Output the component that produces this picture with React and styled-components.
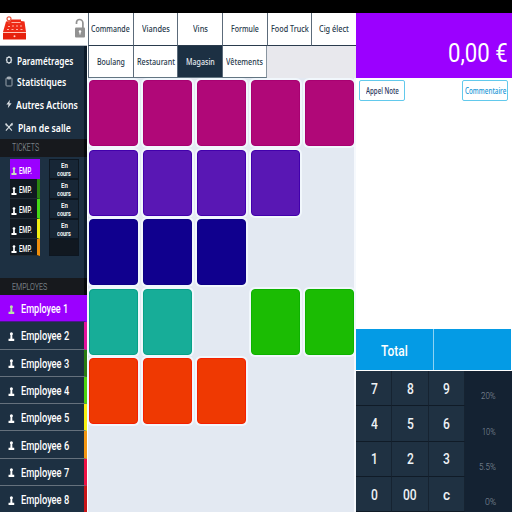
import React, { useLayoutEffect, useRef } from "react";
import styled, { createGlobalStyle } from "styled-components";

const GlobalStyle = createGlobalStyle`
  * { box-sizing: border-box; }
  body { margin: 0; overflow: hidden; background: #000; font-family: Roboto, "Liberation Sans", sans-serif; }
`;

/* Condensed label: the text is squeezed horizontally to the requested width. */
const LabelBox = styled.span`
  display: block;
  flex: none;
  width: ${(p) => p.$w}px;
  font-family: ${(p) => (p.$noto ? '"Noto Sans", sans-serif' : "Roboto, sans-serif")};
  font-size: ${(p) => p.$size}px;
  font-weight: ${(p) => p.$weight || 400};
  line-height: 1;
  color: ${(p) => p.$color};
  white-space: nowrap;
`;
const LabelText = styled.span`
  display: inline-block;
  transform-origin: 0 50%;
`;

function Label({ children, width, size, weight, color = "#fff", noto }) {
  const ref = useRef(null);
  useLayoutEffect(() => {
    const el = ref.current;
    el.style.transform = `scaleX(${width / el.offsetWidth})`;
  }, [width, size]);
  return (
    <LabelBox $w={width} $size={size} $weight={weight} $color={color} $noto={noto}>
      <LabelText ref={ref}>{children}</LabelText>
    </LabelBox>
  );
}

const Screen = styled.div`
  width: 512px;
  height: 512px;
  display: flex;
  flex-direction: column;
  overflow: hidden;
  background: #fff;
`;
const StatusBar = styled.div`
  flex: none;
  height: 13px;
  background: #000;
`;
const Main = styled.div`
  display: grid;
  grid-template-columns: 87px 269px 156px;
  height: 499px;
`;

const Sidebar = styled.aside`
  display: flex;
  flex-direction: column;
  height: 499px;
  overflow: hidden;
  background: #1d3042;
`;
const Brand = styled.div`
  flex: none;
  display: flex;
  justify-content: space-between;
  align-items: flex-start;
  height: 33px;
  padding: 2px 1px 0 3px;
  background: #fff;
  border-bottom: 1px solid #b4bac3;
`;
const Menu = styled.nav`
  flex: none;
  height: 93px;
  padding-top: 3px;
  border-right: 3px solid #0d1b2a;
`;
const MenuItem = styled.div`
  display: flex;
  align-items: center;
  gap: ${(p) => p.$gap}px;
  height: ${(p) => p.$h}px;
  padding-left: 5px;
`;
const SectionTitle = styled.div`
  flex: none;
  display: flex;
  align-items: center;
  height: ${(p) => p.$h}px;
  padding-left: 12px;
  background: #17191d;
  border-right: 3px solid #08090c;
`;
const Tickets = styled.div`
  flex: none;
  display: grid;
  grid-template-columns: 30px 30px;
  column-gap: 9px;
  height: 121px;
  padding: 2px 0 0 10px;
  align-items: start;
  border-right: 3px solid #0d1b2a;
`;
const TicketColumn = styled.div`
  display: grid;
  grid-template-rows: 20px 20px 20px 20px 17px;
  background: #0e1b27;
`;
const Ticket = styled.div`
  display: flex;
  align-items: center;
  gap: 2px;
  padding: 4px 0 0 1px;
  background: ${(p) => (p.$active ? "#9b00ff" : "#111921")};
  border-right: ${(p) => (p.$active ? "0" : "3px")} solid ${(p) => p.$color};
  border-bottom: ${(p) => (p.$active ? "0" : "1px")} solid #202a33;
`;
const Status = styled.div`
  display: flex;
  flex-direction: column;
  align-items: center;
  justify-content: center;
  gap: 0;
  padding-top: 1px;
  background: ${(p) => (p.$empty ? "#111820" : "#172636")};
  border: 1px solid #0d1620;
`;
const Employee = styled.div`
  flex: none;
  display: flex;
  align-items: center;
  gap: 6px;
  height: 27.3px;
  padding: 2px 0 0 8px;
  background: ${(p) => (p.$active ? "#9b00ff" : "#1d3042")};
  border-right: 3px solid ${(p) => p.$color};
  border-bottom: 1px solid ${(p) => (p.$active ? "#4c168c" : "#65717d")};
`;

const Catalog = styled.section`
  height: 499px;
  background: #e3e9f2;
  border-left: 1px solid #fff;
  border-right: 2px solid #f6f9fd;
`;
const Tabs = styled.div`
  display: grid;
  grid-template-columns: repeat(6, 44.7px);
  grid-template-rows: 33px 32px;
  width: 268px;
  height: 65px;
  overflow: hidden;
  background: #e8e8ed;
`;
const Tab = styled.div`
  display: flex;
  align-items: center;
  justify-content: center;
  background: ${(p) => (p.$active ? "#1c3043" : "#fff")};
  border-left: 1px solid #5c6b7a;
  border-bottom: 1px solid ${(p) => (p.$second ? "#627582" : "#2a3b4d")};
  border-right: ${(p) => (p.$last ? "1px" : "0")} solid #8995a0;
`;
const Products = styled.div`
  display: grid;
  grid-template-columns: repeat(5, 49px);
  grid-auto-rows: 66px;
  gap: 3.6px 5px;
  padding: 2px 0 0 1px;
`;
const Product = styled.div`
  background: ${(p) => p.$color};
  border: 1px solid ${(p) => p.$edge};
  border-radius: 4px;
  box-shadow: 0 0 0 2px #f1f7fc;
`;

const Order = styled.section`
  display: flex;
  flex-direction: column;
  height: 499px;
  background: #fff;
`;
const Amount = styled.div`
  flex: none;
  display: flex;
  align-items: center;
  justify-content: flex-end;
  height: 65px;
  padding: 17px 4px 0 0;
  background: #9b00ff;
`;
const OrderBody = styled.div`
  flex: 1;
  display: flex;
  align-items: flex-start;
  justify-content: space-between;
  padding: 2px 4px 0 3px;
`;
const NoteButton = styled.button`
  display: flex;
  align-items: center;
  justify-content: center;
  width: 46px;
  height: 21px;
  padding: 0;
  background: #fff;
  border: 1px solid #62c9ec;
  border-radius: 2px;
`;
const TotalBar = styled.div`
  flex: none;
  display: grid;
  grid-template-columns: 78px 77px;
  height: 42px;
  border-bottom: 1px solid #fff;
`;
const TotalCell = styled.div`
  display: flex;
  align-items: center;
  justify-content: center;
  padding-top: 4px;
  background: #049be5;
  border-right: 1px solid ${(p) => (p.$divider ? "#8ed3f3" : "#049be5")};
`;
const Keypad = styled.div`
  flex: none;
  display: grid;
  grid-template-columns: 36px 36.500px 36px 47.500px;
  grid-template-rows: repeat(4, 35.3px);
  height: 141px;
  background: #142332;
`;
const Key = styled.div`
  display: flex;
  align-items: center;
  justify-content: center;
  padding: 3px 0 0 1px;
  background: #1f3142;
  border-right: 1px solid #162331;
  border-bottom: 1px solid #101b27;
`;
const Rate = styled.div`
  display: flex;
  align-items: center;
  justify-content: flex-end;
  padding: 15px 16px 0 0;
  background: #142232;
`;

const PadlockSlot = styled.div`
  padding-top: 3px;
`;

const Pawn = ({ color = "#fff", size = 9 }) => (
  <svg width={size * 0.75} height={size} viewBox="0 0 9 12" fill={color}>
    <circle cx="4.5" cy="2.2" r="2" />
    <path d="M3.4 3h2.2l.3 6H8.300v3H.7V9h2.400z" />
  </svg>
);

const Register = () => (
  <svg width="24" height="26" viewBox="0 0 24 26">
    <path d="M3 6.500 8 6V4.500h10V6l3.500.5L23 17H0z" fill="#ee2a16" />
    <path d="M0 18h23v6.500H0z" fill="#e6200c" />
    <circle cx="6" cy="3.800" r="2" fill="#fff" stroke="#e9523b" strokeWidth="1.200" />
    <path d="M6 6v3" stroke="#e9523b" strokeWidth="1.200" />
    <path d="M8.500 7.500h9M5 11.500h2M9 11h2M13 11h2M17 11h2M4 14.500h2M8.500 14.500h2M13 14.500h2M17.500 14.500h2" stroke="#ffb3a4" strokeWidth="1.200" />
    <path d="M0 17.500h23" stroke="#ffb7a8" strokeWidth=".8" />
    <circle cx="11.500" cy="21.300" r="1" fill="#ffd1c7" />
  </svg>
);

const Padlock = () => (
  <svg width="12" height="21" viewBox="0 0 12 21">
    <path d="M2.500 6V4.500C2.500 2.500 3.700 1.500 5.500 1.500S8.900 3 8.900 5v5" fill="none" stroke="#929292" strokeWidth="1.700" />
    <rect x="1" y="9.500" width="10" height="10" rx="1" fill="#929292" />
    <circle cx="6" cy="13.500" r="1.200" fill="#fff" />
    <path d="M6 14v2.500" stroke="#fff" strokeWidth="1" />
  </svg>
);

const menuIcons = {
  gear: (
    <svg width="8" height="10" viewBox="0 0 8 10" fill="none" stroke="#dfe5e9">
      <ellipse cx="4" cy="5" rx="2.300" ry="2.900" strokeWidth="1.200" />
      <path d="M4 1v1M4 8v1M.8 5h1M6.200 5h1M1.500 2.300l.7.7M5.800 7l.7.7M6.500 2.300l-.7.7M2.200 7l-.7.7" strokeWidth=".8" />
    </svg>
  ),
  clipboard: (
    <svg width="8" height="11" viewBox="0 0 8 11" fill="none" stroke="#a7b0b8" strokeWidth=".9">
      <rect x="1" y="2" width="6" height="8" rx=".8" />
      <path d="M2.500 1h3v2h-3z" fill="#a7b0b8" />
    </svg>
  ),
  bolt: (
    <svg width="8" height="10" viewBox="0 0 8 10" fill="#d9dee2">
      <path d="M5 .8 1.300 5.500h2.200L2.800 9.300 6.600 4.300H4.400z" />
    </svg>
  ),
  cutlery: (
    <svg width="8" height="10" viewBox="0 0 9 10" fill="none" stroke="#dde2e6">
      <path d="M1 1.200 7.800 9M8 1.200 1 9" strokeWidth="1.200" />
      <path d="M1 1v2l1.500 1.300M6 2.800l2.200-2v2L7 4" strokeWidth="1" />
    </svg>
  ),
};

const menu = [
  { text: "Paramétrages", icon: "gear", w: 56, h: 22, gap: 4 },
  { text: "Statistiques", icon: "clipboard", w: 49, h: 21, gap: 4 },
  { text: "Autres Actions", icon: "bolt", w: 62, h: 24, gap: 3 },
  { text: "Plan de salle", icon: "cutlery", w: 53, h: 22, gap: 4.5 },
];
const ticketColors = ["#9b00ff", "#2b8410", "#45d916", "#f0ef12", "#ef8e0c"];
const employeeColors = ["#9b00ff", "#e3119c", "#2a7b12", "#4ed30e", "#f5ee10", "#f39612", "#ee1045", "#c91418"];
const tabs = [
  ["Commande", 39], ["Viandes", 28], ["Vins", 15], ["Formule", 28], ["Food Truck", 38], ["Cig élect", 30],
  ["Boulang", 28], ["Restaurant", 38], ["Magasin", 29], ["Vêtements", 37],
];
const palette = {
  m: ["#b00878", "#a80071"],
  v: ["#5917b4", "#4200ac"],
  b: ["#10008e", "#0b0084"],
  t: ["#17ad98", "#07a187"],
  g: ["#1bbc03", "#0eb200"],
  o: ["#ef3902", "#f52000"],
};
const products = "mmmmmvvvv-bbb--tt-ggooo".split("");
const keypad = [
  ["7", "8", "9", "20%"],
  ["4", "5", "6", "10%"],
  ["1", "2", "3", "5.5%"],
  ["0", "00", "c", "0%"],
];
const rateWidths = { "20%": 15, "10%": 14, "5.5%": 17, "0%": 11 };

export default function App() {
  return (
    <Screen>
      <GlobalStyle />
      <StatusBar />
      <Main>
        <Sidebar>
          <Brand>
            <Register />
            <PadlockSlot><Padlock /></PadlockSlot>
          </Brand>
          <Menu>
            {menu.map((m) => (
              <MenuItem key={m.text} $h={m.h} $gap={m.gap}>
                {menuIcons[m.icon]}
                <Label width={m.w} size={11} weight={600} noto>{m.text}</Label>
              </MenuItem>
            ))}
          </Menu>
          <SectionTitle $h={18}><Label width={27} size={10} weight={300} color="#9ba2a8">TICKETS</Label></SectionTitle>
          <Tickets>
            <TicketColumn>
              {ticketColors.map((c, i) => (
                <Ticket key={c} $active={i === 0} $color={c}>
                  <Pawn size={8} color={i === 0 ? "#c9dfc0" : "#fff"} />
                  <Label width={13} size={9} weight={500}>EMP.</Label>
                </Ticket>
              ))}
            </TicketColumn>
            <TicketColumn>
              {[0, 1, 2, 3].map((i) => (
                <Status key={i}>
                  <Label width={6.5} size={7.5} weight={600}>En</Label>
                  <Label width={14} size={7.5} weight={600}>cours</Label>
                </Status>
              ))}
              <Status $empty />
            </TicketColumn>
          </Tickets>
          <SectionTitle $h={17}><Label width={35} size={9.5} weight={300} color="#9ba2a8">EMPLOYES</Label></SectionTitle>
          {employeeColors.map((c, i) => (
            <Employee key={c} $active={i === 0} $color={c}>
              <Pawn size={9} color={i === 0 ? "#b9e4a8" : "#fff"} />
              <Label width={i === 0 ? 47 : 48} size={12} weight={500}>{`Employee ${i + 1}`}</Label>
            </Employee>
          ))}
        </Sidebar>

        <Catalog>
          <Tabs>
            {tabs.map(([text, w], i) => (
              <Tab key={text} $active={text === "Magasin"} $second={i > 5} $last={i === 9}>
                <Label width={w} size={9.5} weight={500} noto color={text === "Magasin" ? "#e8edf2" : "#26384a"}>{text}</Label>
              </Tab>
            ))}
          </Tabs>
          <Products>
            {products.map((k, i) =>
              k === "-" ? <span key={i} /> : <Product key={i} $color={palette[k][0]} $edge={palette[k][1]} />
            )}
          </Products>
        </Catalog>

        <Order>
          <Amount><Label width={60} size={25.5}>0,00 €</Label></Amount>
          <OrderBody>
            <NoteButton><Label width={33} size={8} weight={500} noto color="#26345c">Appel Note</Label></NoteButton>
            <NoteButton><Label width={41} size={8} weight={500} noto color="#1697d6">Commentaire</Label></NoteButton>
          </OrderBody>
          <TotalBar>
            <TotalCell $divider><Label width={27} size={15.5} weight={500}>Total</Label></TotalCell>
            <TotalCell />
          </TotalBar>
          <Keypad>
            {keypad.flat().map((k, i) =>
              i % 4 === 3 ? (
                <Rate key={k}><Label width={rateWidths[k]} size={9.5} weight={300} color="#8b96a1">{k}</Label></Rate>
              ) : (
                <Key key={k}><Label width={k === "00" ? 14 : 7} size={15.5} weight={500} color="#eef2f5">{k}</Label></Key>
              )
            )}
          </Keypad>
        </Order>
      </Main>
    </Screen>
  );
}
